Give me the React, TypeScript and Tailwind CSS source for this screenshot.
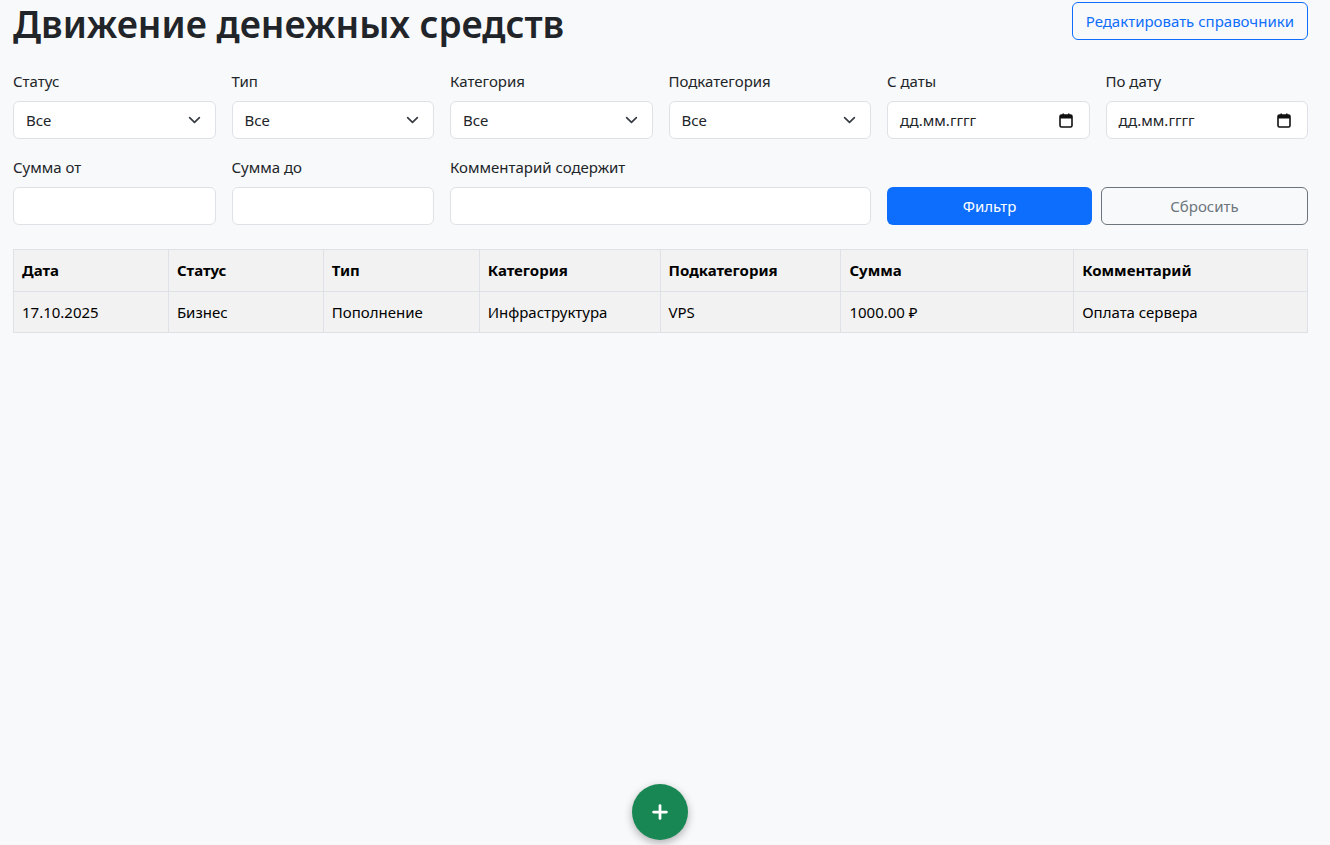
import { Plus } from "lucide-react";

const font = { fontFamily: '"Segoe UI", "Noto Sans", "Open Sans", sans-serif' };

const Chevron = () => (
  <svg className="pointer-events-none absolute right-[15px] top-1/2 -translate-y-1/2" width="13" height="10" viewBox="0 0 16 12">
    <path fill="none" stroke="#343a40" strokeLinecap="round" strokeLinejoin="round" strokeWidth="2" d="m2 3 6 6 6-6" />
  </svg>
);

const CalendarIcon = () => (
  <svg width="14" height="15" viewBox="0 0 14 15" className="shrink-0">
    <rect x="1" y="2" width="12" height="12" rx="1.5" fill="none" stroke="#111" strokeWidth="1.6" />
    <rect x="1" y="2" width="12" height="3.5" fill="#111" />
    <rect x="3.5" y="0.5" width="1.5" height="3" fill="#111" />
    <rect x="9" y="0.5" width="1.5" height="3" fill="#111" />
  </svg>
);

const Field = ({ label, children, className = "" }: { label: string; children: React.ReactNode; className?: string }) => (
  <div className={className}>
    <label className="mb-2 block text-[15px] leading-6 text-[#212529]">{label}</label>
    {children}
  </div>
);

const SelectBox = () => (
  <div className="relative">
    <select className="h-[38px] w-full appearance-none rounded-md border border-[#dee2e6] bg-white pl-3 pr-9 text-[15px] text-[#212529] outline-none">
      <option>Все</option>
    </select>
    <Chevron />
  </div>
);

const DateBox = () => (
  <div className="flex h-[38px] w-full items-center justify-between rounded-md border border-[#dee2e6] bg-white pl-3 pr-[16px] text-[15px] text-[#212529]">
    <span>дд.мм.гггг</span>
    <CalendarIcon />
  </div>
);

const TextBox = () => (
  <input className="h-[38px] w-full rounded-md border border-[#dee2e6] bg-white px-3 text-[15px] outline-none" />
);

const rows = [
  ["17.10.2025", "Бизнес", "Пополнение", "Инфраструктура", "VPS", "1000.00 ₽", "Оплата сервера"],
];

const headers = ["Дата", "Статус", "Тип", "Категория", "Подкатегория", "Сумма", "Комментарий"];
const colWidths = [155, 155, 156, 181, 181, 233, 234];

export default function App() {
  return (
    <div className="min-h-screen bg-[#f8f9fa] pl-[13px] pr-[22px] text-[#212529]" style={font}>
      {/* Header */}
      <div className="flex items-start justify-between pt-[2px]">
        <h1 className="text-[37px] font-semibold leading-[44px] text-[#212529]">Движение денежных средств</h1>
        <button className="h-[38px] rounded-md border border-[#0d6efd] px-[13px] text-[15px] text-[#0d6efd]">
          Редактировать справочники
        </button>
      </div>

      {/* Filters */}
      <div className="mt-[23px] grid grid-cols-6 gap-x-4 gap-y-[16px]">
        <Field label="Статус"><SelectBox /></Field>
        <Field label="Тип"><SelectBox /></Field>
        <Field label="Категория"><SelectBox /></Field>
        <Field label="Подкатегория"><SelectBox /></Field>
        <Field label="С даты"><DateBox /></Field>
        <Field label="По дату"><DateBox /></Field>

        <Field label="Сумма от"><TextBox /></Field>
        <Field label="Сумма до"><TextBox /></Field>
        <Field label="Комментарий содержит" className="col-span-2"><TextBox /></Field>
        <div className="col-span-2 flex items-end gap-[9px]">
          <button className="h-[38px] flex-1 rounded-md bg-[#0d6efd] text-[15px] text-white">Фильтр</button>
          <button className="h-[38px] flex-1 rounded-md border border-[#6c757d] text-[15px] text-[#6c757d]">Сбросить</button>
        </div>
      </div>

      {/* Table */}
      <table className="mt-[24px] w-full border-collapse border border-[#dee2e6] bg-[#f2f2f2] text-[15px] text-black">
        <colgroup>
          {colWidths.map((w, i) => (
            <col key={i} style={{ width: w }} />
          ))}
        </colgroup>
        <thead>
          <tr className="h-[42px]">
            {headers.map((h) => (
              <th key={h} className="border border-[#dee2e6] px-2 text-left font-bold">{h}</th>
            ))}
          </tr>
        </thead>
        <tbody>
          {rows.map((r, i) => (
            <tr key={i} className="h-[41px]">
              {r.map((c, j) => (
                <td key={j} className="border border-[#dee2e6] px-2">{c}</td>
              ))}
            </tr>
          ))}
        </tbody>
      </table>

      {/* Add button */}
      <button className="fixed bottom-[5px] left-[calc(50%-5px)] flex h-[56px] w-[56px] -translate-x-1/2 items-center justify-center rounded-full bg-[#198754] text-white shadow-[0_3px_8px_rgba(0,0,0,0.3)]">
        <Plus size={22} strokeWidth={3} />
      </button>
    </div>
  );
}
